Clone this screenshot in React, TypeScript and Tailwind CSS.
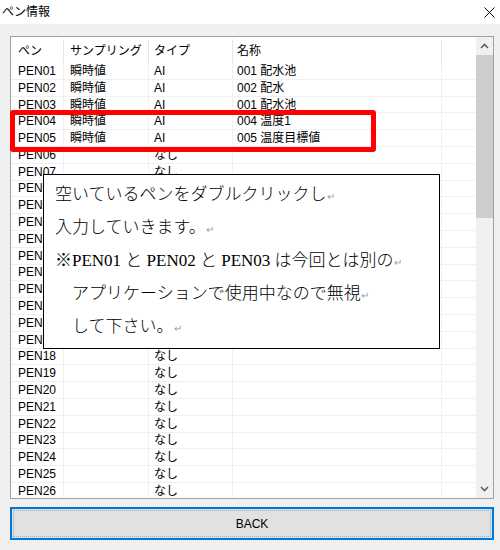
import React from "react";

const rows: [string, string, string, string][] = [
  ["PEN01", "瞬時値", "AI", "001 配水池"],
  ["PEN02", "瞬時値", "AI", "002 配水"],
  ["PEN03", "瞬時値", "AI", "001 配水池"],
  ["PEN04", "瞬時値", "AI", "004 温度1"],
  ["PEN05", "瞬時値", "AI", "005 温度目標値"],
  ...Array.from({ length: 21 }, (_, i) => [`PEN${String(i + 6).padStart(2, "0")}`, "", "なし", ""] as [string, string, string, string]),
];

function Chevron({ up }: { up?: boolean }) {
  return (
    <svg width="9" height="6" viewBox="0 0 9 6">
      <polyline points={up ? "1,5 4.5,1.5 8,5" : "1,1 4.5,4.5 8,1"} fill="none" stroke="#606060" strokeWidth="1.6" />
    </svg>
  );
}

const Mark = () => <span className="text-[10px] text-gray-400">↵</span>;

export default function App() {
  const font = "font-['Liberation_Sans','Noto_Sans_CJK_JP',sans-serif]";
  return (
    <div className={`relative w-[500px] h-[550px] overflow-hidden bg-[#f0f0f0] text-black ${font}`}>
      {/* Title bar */}
      <div className="flex h-[24px] items-center justify-between bg-white pl-[2px] pr-[5px]">
        <span className="text-[12px] leading-none">ペン情報</span>
        <svg width="11" height="11" viewBox="0 0 11 11">
          <path d="M0.5 0.5 L10.5 10.5 M10.5 0.5 L0.5 10.5" stroke="#000" strokeWidth="1" />
        </svg>
      </div>

      <div className="flex flex-col pl-[10px] pr-[6px] pt-[12px]">
        {/* List box */}
        <div className="flex h-[463px] border border-[#a0a0a0] bg-white">
          <div className="flex-1 overflow-hidden text-[12px]">
            <div className="flex h-[26px] items-center pt-[2px]">
              <div className="flex h-full w-[53px] items-center border-r border-[#e5e5e5] pl-[7px]">ペン</div>
              <div className="flex h-full w-[85px] items-center border-r border-[#e5e5e5] pl-[6px]">サンプリング</div>
              <div className="flex h-full w-[84px] items-center border-r border-[#e5e5e5] pl-[5px]">タイプ</div>
              <div className="flex h-full w-[209px] items-center border-r border-[#e5e5e5] pl-[4px]">名称</div>
              <div className="h-full flex-1" />
            </div>
            {rows.map((r) => (
              <div key={r[0]} className="flex h-[16.8px] items-center border-b border-[#f0f0f0]">
                <div className="flex h-full w-[53px] items-center border-r border-[#f0f0f0] pl-[7px]">{r[0]}</div>
                <div className="flex h-full w-[85px] items-center border-r border-[#f0f0f0] pl-[6px]">{r[1]}</div>
                <div className="flex h-full w-[84px] items-center border-r border-[#f0f0f0] pl-[5px]">{r[2]}</div>
                <div className="flex h-full w-[209px] items-center border-r border-[#f0f0f0] pl-[4px]">{r[3]}</div>
                <div className="h-full flex-1" />
              </div>
            ))}
          </div>
          {/* Scrollbar */}
          <div className="flex w-[17px] flex-col bg-[#f0f0f0]">
            <div className="flex h-[18px] items-center justify-center"><Chevron up /></div>
            <div className="h-[163px] bg-[#cdcdcd]" />
            <div className="flex-1" />
            <div className="flex h-[18px] items-center justify-center"><Chevron /></div>
          </div>
        </div>

        {/* Button */}
        <div className="mt-[8px] flex h-[33px] items-center justify-center border-2 border-[#0078d7] bg-[#e1e1e1] p-[1px]">
          <div className="flex h-full w-full items-center justify-center border border-dotted border-[#0078d7]/40 text-[12px]">BACK</div>
        </div>
      </div>

      {/* Annotation: red highlight */}
      <div className="absolute left-[10px] top-[110px] h-[42px] w-[366px] rounded-[3px] border-[5px] border-[#ff0000]" />

      {/* Annotation: note box */}
      <div className="absolute left-[43px] top-[174px] h-[175px] w-[397px] border border-black bg-white pl-[11px] pt-[4px] font-['Liberation_Serif','Noto_Sans_CJK_JP',serif] text-[17px] leading-[31px] font-light">
        <div>空いているペンをダブルクリックし<Mark /></div>
        <div>入力していきます。<Mark /></div>
        <div>※PEN01 と PEN02 と PEN03 は今回とは別の<Mark /></div>
        <div className="pl-[17px]">アプリケーションで使用中なので無視<Mark /></div>
        <div className="pl-[17px]">して下さい。<Mark /></div>
      </div>
    </div>
  );
}
